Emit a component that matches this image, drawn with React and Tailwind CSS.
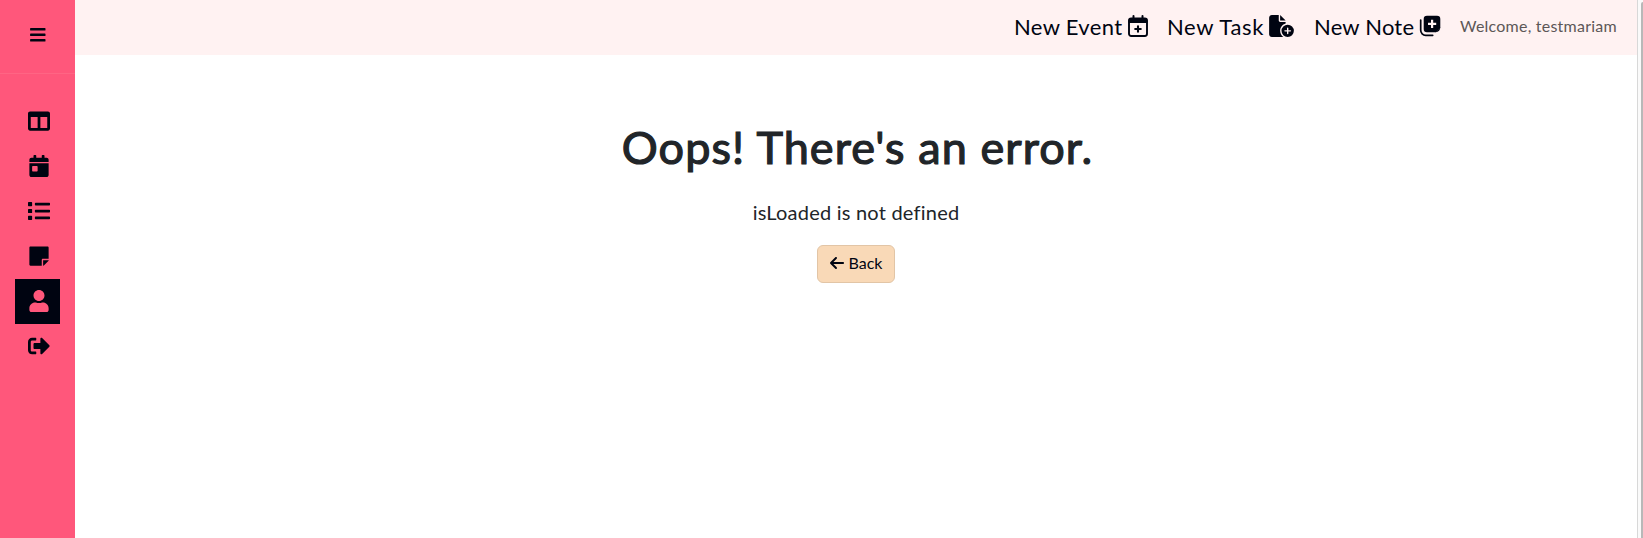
import { FaBars, FaColumns, FaCalendarDay, FaList, FaStickyNote, FaUser, FaSignOutAlt } from "react-icons/fa";
import { FaFileCirclePlus, FaArrowLeft } from "react-icons/fa6";

const items = [FaColumns, FaCalendarDay, FaList, FaStickyNote, FaUser, FaSignOutAlt];

function EventAddIcon() {
  return (
    <svg className="h-[22px] w-5 shrink-0" viewBox="0 0 20 22" fill="none" stroke="#000411">
      <path d="M5.500 1v4M14.500 1v4" strokeWidth="2" strokeLinecap="round" />
      <rect x="1" y="3.500" width="18" height="17.500" rx="2.200" strokeWidth="1.900" />
      <path d="M1 5.500a2 2 0 0 1 2-2h14a2 2 0 0 1 2 2v2H1Z" fill="#000411" strokeWidth="1" />
      <path d="M10 11.200v5.600M7.200 14h5.600" strokeWidth="2.100" strokeLinecap="round" />
    </svg>
  );
}

function NoteAddIcon() {
  return (
    <svg className="size-[22px] shrink-0" viewBox="0 0 22 22" fill="#000411">
      <path fillRule="evenodd" d="M8 .7h10A3.300 3.300 0 0 1 21.300 4v8.700l-4.300 4.500H8A3.300 3.300 0 0 1 4.700 13.900V4A3.300 3.300 0 0 1 8 .7Zm4 4v3H9v2.200h3v3h2.200v-3h3V7.700h-3v-3Z" />
      <path d="M16.500 17.200q4.800-.4 4.800-5Z" />
      <path d="M1.700 5v10.300a5 5 0 0 0 5 5h7" fill="none" stroke="#000411" strokeWidth="1.700" strokeLinecap="round" />
    </svg>
  );
}

export default function App() {
  return (
    <div className="flex h-[538px] w-full overflow-hidden bg-white font-['Lato',sans-serif] text-[#212529]">
      <aside className="flex w-[75px] shrink-0 flex-col bg-[#ff577b] text-[#000411]">
        <div className="flex h-[74px] items-center justify-center border-b border-[#ff6584] pb-1">
          <FaBars className="size-[17.600px]" />
        </div>
        <nav className="flex flex-col items-center pt-[25px]">
          {items.map((Icon, i) => (
            <a key={i} className={i === 4 ? "flex size-[45px] items-center justify-center bg-[#000411] pb-px pl-[3px] text-[#ff577b]" : "flex size-[45px] items-center justify-center pb-px pl-[3px]"}>
              <Icon className="size-[22px]" />
            </a>
          ))}
        </nav>
      </aside>
      <div className="flex min-w-0 flex-1 flex-col">
        <header className="flex h-[55px] items-center justify-end bg-[#fff2f2] pr-5 pb-[3px] whitespace-nowrap text-[22px] text-[#000411]">
          <a className="flex w-[153px] items-center gap-[5px]">
            <span className="w-[109px] tracking-[0.35px]">New Event</span>
            <EventAddIcon />
          </a>
          <a className="flex w-[147px] items-center gap-[5px]">
            <span className="w-[97px] tracking-[0.650px]">New Task</span>
            <FaFileCirclePlus className="h-[22px] w-[25px] shrink-0" />
          </a>
          <a className="flex w-[146px] items-center gap-[5px]">
            <span className="w-[100px] tracking-[0.2px]">New Note</span>
            <NoteAddIcon />
          </a>
          <span className="w-[157px] text-base tracking-[0.230px] text-[#5c5757]">Welcome, testmariam</span>
        </header>
        <main className="flex flex-col items-center pt-[65px]">
          <h1 className="pl-[3px] text-[45px] leading-[54px] tracking-[1.070px] [-webkit-text-stroke:1.200px_#212529]">Oops! There's an error.</h1>
          <p className="mt-[23px] text-xl leading-[30px] tracking-[0.220px]">isLoaded is not defined</p>
          <button className="mt-[18px] flex h-[38px] w-[78px] items-center justify-center gap-1 rounded-md border border-[#e2c5a6] bg-[#f9d9b7] pr-px pb-0.5 text-base text-[#000411]">
            <FaArrowLeft className="size-4" />
            <span>Back</span>
          </button>
        </main>
      </div>
      <div className="flex w-1.5 shrink-0 justify-end border-l border-[#d8d8d8] bg-[#fafafa] pt-0.5">
        <div className="w-0.5 rounded-tl-full bg-[#b8b8b8]" />
      </div>
    </div>
  );
}
